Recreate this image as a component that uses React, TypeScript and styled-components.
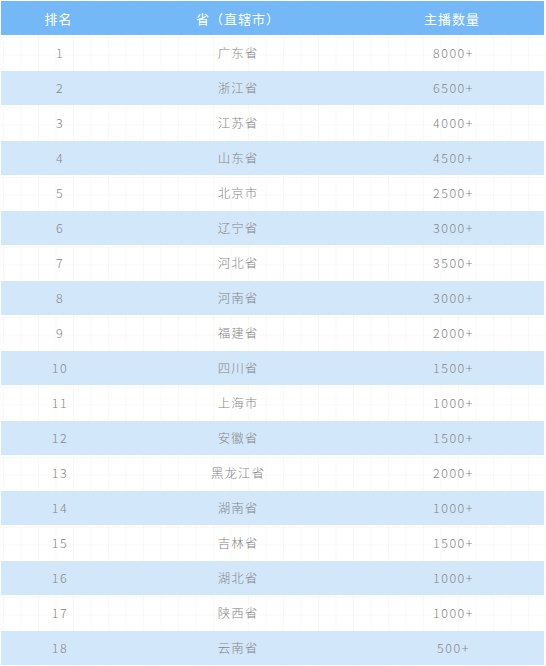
import React from "react";
import styled, { createGlobalStyle } from "styled-components";

const Global = createGlobalStyle`
  html, body { margin: 0; padding: 0; background: #fff; }
  body {
    font-family: "Noto Sans CJK SC", "Noto Sans", sans-serif;
  }
`;

const Page = styled.div`
  width: 546px;
  height: 666px;
  box-sizing: border-box;
  padding: 1px 2px 0 1px;
  background-color: #fff;
  background-image:
    linear-gradient(to right, rgba(200, 185, 170, 0.09) 1px, transparent 1px),
    linear-gradient(to bottom, rgba(200, 185, 170, 0.09) 1px, transparent 1px);
  background-size: 17.5px 17.5px;
  background-position: 3px 2px;
`;

const Table = styled.div`
  display: flex;
  flex-direction: column;
  gap: 1px;
`;

const Row = styled.div<{ $variant: "head" | "blue" | "plain" }>`
  display: grid;
  grid-template-columns: 115px 244px 184px;
  height: 34px;
  align-items: center;
  background: ${(p) =>
    p.$variant === "head" ? "#74b8f7" : p.$variant === "blue" ? "#d3e7fb" : "transparent"};
  color: ${(p) => (p.$variant === "head" ? "#ffffff" : "#868686")};
  font-size: ${(p) => (p.$variant === "head" ? "13px" : "12.5px")};
  font-weight: ${(p) => (p.$variant === "head" ? 400 : 300)};
`;

const Cell = styled.div<{ $num?: boolean }>`
  text-align: center;
  letter-spacing: ${(p) => (p.$num ? "1.5px" : "1px")};
  line-height: 1;
  padding-left: ${(p) => (p.$num ? "3px" : "0")};
`;

const data: [string, string][] = [
  ["广东省", "8000+"],
  ["浙江省", "6500+"],
  ["江苏省", "4000+"],
  ["山东省", "4500+"],
  ["北京市", "2500+"],
  ["辽宁省", "3000+"],
  ["河北省", "3500+"],
  ["河南省", "3000+"],
  ["福建省", "2000+"],
  ["四川省", "1500+"],
  ["上海市", "1000+"],
  ["安徽省", "1500+"],
  ["黑龙江省", "2000+"],
  ["湖南省", "1000+"],
  ["吉林省", "1500+"],
  ["湖北省", "1000+"],
  ["陕西省", "1000+"],
  ["云南省", "500+"],
];

export default function App() {
  return (
    <>
      <Global />
      <Page>
        <Table>
          <Row $variant="head">
            <Cell>排名</Cell>
            <Cell>省（直辖市）</Cell>
            <Cell>主播数量</Cell>
          </Row>
          {data.map(([prov, count], i) => (
            <Row key={i} $variant={i % 2 === 1 ? "blue" : "plain"}>
              <Cell $num>{i + 1}</Cell>
              <Cell>{prov}</Cell>
              <Cell $num>{count}</Cell>
            </Row>
          ))}
        </Table>
      </Page>
    </>
  );
}
